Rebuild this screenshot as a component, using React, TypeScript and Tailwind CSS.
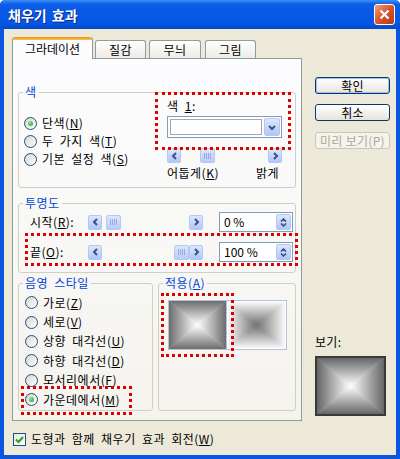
import React from "react";

function Radio({ checked }: { checked?: boolean }) {
  return (
    <span className="w-[13px] h-[13px] rounded-full border border-[#1c5180] bg-[linear-gradient(135deg,#d6d5cf,#ffffff)] flex items-center justify-center shrink-0">
      {checked && (
        <span className="w-[5px] h-[5px] rounded-full bg-[radial-gradient(circle_at_35%_35%,#8ee88e,#1e9b1e)]" />
      )}
    </span>
  );
}

function Chev({ dir }: { dir: "l" | "r" | "u" | "d" }) {
  const d =
    dir === "l"
      ? "M5 1 L2 4 L5 7"
      : dir === "r"
      ? "M2 1 L5 4 L2 7"
      : dir === "d"
      ? "M1 2 L4 5 L7 2"
      : "M1 5 L4 2 L7 5";
  const w = dir === "l" || dir === "r" ? 7 : 8;
  const h = dir === "l" || dir === "r" ? 8 : 7;
  return (
    <svg width={w} height={h} viewBox={`0 0 ${w} ${h}`}>
      <path d={d} stroke="#3d5080" strokeWidth="2" fill="none" />
    </svg>
  );
}

function SBtn({ dir }: { dir: "l" | "r" }) {
  return (
    <span className="w-[14px] h-[15px] shrink-0 rounded-[2px] border border-[#b4c8f4] bg-[linear-gradient(to_bottom,#dde7fd,#b0c6f7)] flex items-center justify-center">
      <Chev dir={dir} />
    </span>
  );
}

function Thumb() {
  return (
    <span className="w-[15px] h-[15px] shrink-0 rounded-[2px] border border-[#b4c8f4] bg-[linear-gradient(to_bottom,#dde7fd,#b8cbf8)] flex items-center justify-center gap-[1px]">
      <span className="w-[1px] h-[6px] bg-[#94aae0]" />
      <span className="w-[1px] h-[6px] bg-[#94aae0]" />
      <span className="w-[1px] h-[6px] bg-[#94aae0]" />
      <span className="w-[1px] h-[6px] bg-[#94aae0]" />
    </span>
  );
}

function Slider({ gap, w }: { gap: number | null; w: string }) {
  return (
    <div className={`${w} h-[15px] flex bg-[#f8f8f5]`}>
      <SBtn dir="l" />
      {gap === 19 && <span className="ml-[19px]"><Thumb /></span>}
      {gap === 4 && <span className="ml-[4px]"><Thumb /></span>}
      <span className="flex-1" />
      {gap === null && <Thumb />}
      <SBtn dir="r" />
    </div>
  );
}

function Spin({ value }: { value: string }) {
  return (
    <div className="w-[74px] h-[20px] border border-[#7f9db9] bg-white flex items-center tracking-normal [word-spacing:0px]">
      <span className="flex-1 pl-[4px] leading-[14px]">{value}</span>
      <span className="w-[15px] h-[16px] mr-[1px] rounded-[2px] border border-[#b4c8f4] bg-[linear-gradient(to_bottom,#dde7fd,#b0c6f7)] flex flex-col items-center justify-center gap-[1px]">
        <svg width="7" height="4" viewBox="0 0 7 4"><path d="M1 3.5 L3.5 1 L6 3.5" stroke="#3d5080" strokeWidth="1.6" fill="none" /></svg>
        <svg width="7" height="4" viewBox="0 0 7 4"><path d="M1 0.5 L3.5 3 L6 0.5" stroke="#3d5080" strokeWidth="1.6" fill="none" /></svg>
      </span>
    </div>
  );
}

function CenterGrad({
  w,
  h,
  edge,
  center,
  id,
}: {
  w: number;
  h: number;
  edge: string;
  center: string;
  id: string;
}) {
  const cx = w / 2;
  const cy = h / 2;
  return (
    <svg width={w} height={h} viewBox={`0 0 ${w} ${h}`} className="block">
      <defs>
        <linearGradient id={`${id}t`} gradientUnits="userSpaceOnUse" x1="0" y1="0" x2="0" y2={cy}>
          <stop offset="0" stopColor={edge} />
          <stop offset="1" stopColor={center} />
        </linearGradient>
        <linearGradient id={`${id}b`} gradientUnits="userSpaceOnUse" x1="0" y1={h} x2="0" y2={cy}>
          <stop offset="0" stopColor={edge} />
          <stop offset="1" stopColor={center} />
        </linearGradient>
        <linearGradient id={`${id}l`} gradientUnits="userSpaceOnUse" x1="0" y1="0" x2={cx} y2="0">
          <stop offset="0" stopColor={edge} />
          <stop offset="1" stopColor={center} />
        </linearGradient>
        <linearGradient id={`${id}r`} gradientUnits="userSpaceOnUse" x1={w} y1="0" x2={cx} y2="0">
          <stop offset="0" stopColor={edge} />
          <stop offset="1" stopColor={center} />
        </linearGradient>
      </defs>
      <polygon points={`0,0 ${w},0 ${cx},${cy}`} fill={`url(#${id}t)`} stroke={`url(#${id}t)`} strokeWidth="0.5" />
      <polygon points={`0,${h} ${w},${h} ${cx},${cy}`} fill={`url(#${id}b)`} stroke={`url(#${id}b)`} strokeWidth="0.5" />
      <polygon points={`0,0 0,${h} ${cx},${cy}`} fill={`url(#${id}l)`} stroke={`url(#${id}l)`} strokeWidth="0.5" />
      <polygon points={`${w},0 ${w},${h} ${cx},${cy}`} fill={`url(#${id}r)`} stroke={`url(#${id}r)`} strokeWidth="0.5" />
    </svg>
  );
}

function Btn({ children, def, disabled }: { children: React.ReactNode; def?: boolean; disabled?: boolean }) {
  if (disabled)
    return (
      <div className="w-[75px] h-[17px] rounded-[3px] border border-[#c9c7ba] bg-[#f5f4ea] text-[#aca899] flex items-center justify-center leading-[14px]">
        {children}
      </div>
    );
  return (
    <div
      className={`w-[75px] h-[17px] rounded-[3px] border border-[#003c74] bg-[linear-gradient(to_bottom,#ffffff,#e6e4dc)] flex items-center justify-center leading-[14px] ${
        def ? "shadow-[inset_0_0_0_1px_#a3bdee]" : ""
      }`}
    >
      {children}
    </div>
  );
}

export default function App() {
  return (
    <div className="relative w-[400px] h-[459px] bg-white font-['Noto_Sans_CJK_KR','Noto_Sans',sans-serif] text-[12px] text-black overflow-hidden">
      <div className="w-[400px] h-[459px] rounded-t-[5px] bg-[#0a56e0] flex flex-col">
        {/* title bar */}
        <div className="h-[29px] rounded-t-[5px] bg-[linear-gradient(to_bottom,#3d8ff5_0%,#0b5ce8_15%,#0457e4_80%,#0349cd_100%)] flex items-center pl-[8px] pr-[4px]">
          <span className="text-white font-bold text-[14px] leading-[16px] [word-spacing:2px] [text-shadow:1px_1px_0_#0a2a8a]">
            채우기 효과
          </span>
          <span className="flex-1" />
          <span className="w-[21px] h-[21px] rounded-[3px] border border-white bg-[linear-gradient(135deg,#f0a080,#d8542a_50%,#b83a16)] flex items-center justify-center mr-[1px]">
            <svg width="11" height="11" viewBox="0 0 11 11">
              <path d="M1.5 1.5 L9.5 9.5 M9.5 1.5 L1.5 9.5" stroke="white" strokeWidth="2.2" />
            </svg>
          </span>
        </div>
        {/* body */}
        <div className="flex-1 mx-[4px] mb-[4px] bg-[#ece9d8] flex flex-col">
          <div className="flex">
            {/* left: tabs + panel */}
            <div className="ml-[8px] mt-[8px] flex flex-col">
              <div className="flex items-end h-[21px]">
                <div className="relative z-10 w-[81px] h-[22px] -mb-[1px] bg-[#fcfcfe] border-x border-[#919b9c] rounded-t-[3px] flex flex-col overflow-hidden">
                  <span className="h-[3px] bg-[linear-gradient(to_bottom,#e68b2c,#ffc73c)]" />
                  <span className="flex-1 flex items-center justify-center pb-[2px] leading-[14px]">그라데이션</span>
                </div>
                <div className="ml-[2px] w-[51px] h-[18px] bg-[linear-gradient(to_bottom,#ffffff,#ecebe5)] border border-b-0 border-[#919b9c] rounded-t-[3px] flex items-center justify-center leading-[14px] tracking-[0.5px]">
                  질감
                </div>
                <div className="ml-[3px] w-[52px] h-[18px] bg-[linear-gradient(to_bottom,#ffffff,#ecebe5)] border border-b-0 border-[#919b9c] rounded-t-[3px] flex items-center justify-center leading-[14px] tracking-[0.5px]">
                  무늬
                </div>
                <div className="ml-[4px] w-[51px] h-[18px] bg-[linear-gradient(to_bottom,#ffffff,#ecebe5)] border border-b-0 border-[#919b9c] rounded-t-[3px] flex items-center justify-center leading-[14px] tracking-[0.5px]">
                  그림
                </div>
              </div>
              <div className="w-[290px] h-[363px] border border-[#919b9c] bg-[linear-gradient(to_bottom,#fcfcfe,#f4f3ee)] px-[5px] flex flex-col tracking-[0.5px] [word-spacing:3px]">
                {/* 색 group */}
                <fieldset className="mt-[26px] border border-[#d0d0bf] rounded-[3px]">
                  <legend className="ml-[4px] px-[2px] leading-[14px] text-[#0046d5]">색</legend>
                  <div className="h-[88px] flex">
                    <div className="w-[148px] pl-[5px] pt-[15px] flex flex-col">
                      <div className="h-[18px] flex items-center gap-[5px]">
                        <Radio checked />
                        <span className="leading-[14px]">단색(<u>N</u>)</span>
                      </div>
                      <div className="h-[18px] flex items-center gap-[5px]">
                        <Radio />
                        <span className="leading-[14px]">두 가지 색(<u>T</u>)</span>
                      </div>
                      <div className="h-[18px] flex items-center gap-[5px]">
                        <Radio />
                        <span className="leading-[14px]">기본 설정 색(<u>S</u>)</span>
                      </div>
                    </div>
                    <div className="w-[115px] flex flex-col">
                      <span className="h-[14px] leading-[14px]">
                        색 <u>1</u>:
                      </span>
                      <div className="mt-[3px] w-[115px] h-[22px] border border-[#7f9db9] bg-white flex items-center pl-[2px] pr-[1px]">
                        <span className="flex-1 h-[16px] border border-[#a7a6aa] bg-white" />
                        <span className="ml-[2px] w-[16px] h-[18px] rounded-[2px] border border-[#b4c8f4] bg-[linear-gradient(to_bottom,#dde7fd,#b0c6f7)] flex items-center justify-center">
                          <Chev dir="d" />
                        </span>
                      </div>
                      <div className="mt-[10px]">
                        <Slider gap={19} w="w-[115px]" />
                      </div>
                      <div className="mt-[3px] h-[14px] leading-[14px] flex justify-between">
                        <span>어둡게(<u>K</u>)</span>
                        <span className="pr-[3px]">밝게</span>
                      </div>
                    </div>
                  </div>
                </fieldset>
                {/* 투명도 */}
                <fieldset className="mt-[8px] border border-[#d0d0bf] rounded-[3px]">
                  <legend className="ml-[4px] px-[2px] leading-[14px] text-[#0046d5]">투명도</legend>
                  <div className="h-[62px] pt-[2px] flex flex-col">
                    <div className="h-[20px] flex items-center">
                      <span className="w-[69px] pl-[11px] leading-[14px]">시작(<u>R</u>):</span>
                      <Slider gap={4} w="w-[115px]" />
                      <span className="ml-[16px]">
                        <Spin value="0 %" />
                      </span>
                    </div>
                    <div className="mt-[10px] h-[20px] flex items-center">
                      <span className="w-[69px] pl-[11px] leading-[14px]">끝(<u>O</u>):</span>
                      <Slider gap={null} w="w-[115px]" />
                      <span className="ml-[16px]">
                        <Spin value="100 %" />
                      </span>
                    </div>
                  </div>
                </fieldset>
                {/* 음영 스타일 + 적용 */}
                <div className="mt-[3px] flex gap-[5px]">
                  <fieldset className="w-[135px] border border-[#d0d0bf] rounded-[3px]">
                    <legend className="ml-[4px] px-[2px] leading-[14px] text-[#0046d5]">음영 스타일</legend>
                    <div className="h-[120px] pt-[3px] pl-[6px] flex flex-col">
                      {[
                        ["가로(", "Z", ")"],
                        ["세로(", "V", ")"],
                        ["상향 대각선(", "U", ")"],
                        ["하향 대각선(", "D", ")"],
                        ["모서리에서(", "F", ")"],
                        ["가운데에서(", "M", ")"],
                      ].map((r, i) => (
                        <div key={i} className="h-[19.4px] flex items-center gap-[5px]">
                          <Radio checked={i === 5} />
                          <span className="leading-[14px]">
                            {r[0]}
                            <u>{r[1]}</u>
                            {r[2]}
                          </span>
                        </div>
                      ))}
                    </div>
                  </fieldset>
                  <fieldset className="w-[138px] border border-[#d0d0bf] rounded-[3px]">
                    <legend className="ml-[4px] px-[2px] leading-[14px] text-[#0046d5]">
                      적용(<u>A</u>)
                    </legend>
                    <div className="h-[120px] pt-[10px] pl-[9px] flex items-start">
                      <div className="border border-[#b4c2da]">
                        <CenterGrad w={57} h={48} edge="#6c6c6c" center="#ffffff" id="v1" />
                      </div>
                      <div className="border border-[#b4c2da] border-l-0">
                        <CenterGrad w={59} h={48} edge="#ffffff" center="#707070" id="v2" />
                      </div>
                    </div>
                  </fieldset>
                </div>
              </div>
            </div>
            {/* right column */}
            <div className="ml-[13px] mt-[48px] w-[75px] flex flex-col tracking-[0.3px]">
              <Btn def>확인</Btn>
              <div className="mt-[10px]">
                <Btn>취소</Btn>
              </div>
              <div className="mt-[11px]">
                <Btn disabled>미리 보기(P)</Btn>
              </div>
              <span className="mt-[186px] h-[14px] leading-[14px]">보기:</span>
              <div className="mt-[7px] w-[71px] h-[60px] border-[2px] border-[#3a3a3a]">
                <CenterGrad w={67} h={56} edge="#666666" center="#ffffff" id="pv" />
              </div>
            </div>
          </div>
          {/* bottom checkbox */}
          <div className="ml-[9px] mt-[11px] flex items-center gap-[5px]">
            <span className="w-[13px] h-[13px] border border-[#1c5180] bg-[linear-gradient(135deg,#e6e6e0,#ffffff)] flex items-center justify-center">
              <svg width="9" height="9" viewBox="0 0 9 9">
                <path d="M1 4.5 L3.5 7 L8 2" stroke="#21a121" strokeWidth="2" fill="none" />
              </svg>
            </span>
            <span className="leading-[14px] tracking-[0.5px] [word-spacing:3px]">
              도형과 함께 채우기 효과 회전(<u>W</u>)
            </span>
          </div>
        </div>
      </div>
      {/* red dotted annotations */}
      <div className="absolute left-[155px] top-[92px] w-[136px] h-[58px] border-[3px] border-dotted border-[#dd0000]" />
      <div className="absolute left-[25px] top-[233px] w-[273px] h-[33px] border-[3px] border-dotted border-[#dd0000]" />
      <div className="absolute left-[21px] top-[386px] w-[111px] h-[29px] border-[3px] border-dotted border-[#dd0000]" />
      <div className="absolute left-[161px] top-[293px] w-[73px] h-[64px] border-[3px] border-dotted border-[#dd0000]" />
    </div>
  );
}
